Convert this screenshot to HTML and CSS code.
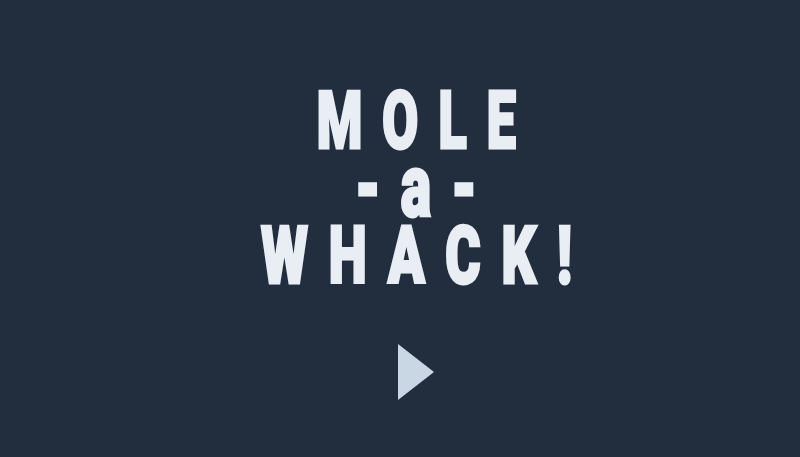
FILE: index.html
```html
<!doctype html>
<html lang="en">
  <head>
    <meta charset="UTF-8" />
    <meta name="viewport" content="width=device-width, initial-scale=1.0" />
    <title>Mole-a-Whack!</title>
    <link rel="stylesheet" href="styles.css">
  </head>
  <body>
    <main class="title-screen">
      <h1 class="logo">
        <span class="logo-line">MOLE</span>
        <span class="logo-line logo-small">-a-</span>
        <span class="logo-line logo-wide">WHACK!</span>
      </h1>
      <button class="play" aria-label="Play">
        <svg width="36" height="56" viewBox="0 0 36 56"><polygon points="0,0 36,28 0,56" /></svg>
      </button>
    </main>
  </body>
</html>
```

FILE: styles.css
```css
html,
body {
  margin: 0;
  padding: 0;
  height: 100%;
  overflow: hidden;
  background: #222e3e;
}
.title-screen {
  height: 100%;
  display: flex;
  flex-direction: column;
  align-items: center;
  padding-left: 32px;
  box-sizing: border-box;
}
.logo {
  margin: 87px 0 0;
  display: flex;
  flex-direction: column;
  align-items: center;
  font-family: Roboto, "DejaVu Sans Condensed", sans-serif;
  font-weight: 900;
  font-size: 80px;
  line-height: 68px;
  color: #e8eef4;
}
/* narrow, heavy, widely tracked block letters */
.logo-line {
  display: block;
  letter-spacing: 31px;
  padding-left: 31px;
  -webkit-text-stroke: 3px currentColor;
  transform: scaleX(0.65);
}
.logo-small {
  font-size: 88px;
  line-height: 62px;
  margin-bottom: 5px;
}
.logo-wide {
  transform: scaleX(0.675);
}
.play {
  margin-top: 54px;
  padding: 0;
  border: 0;
  background: none;
  cursor: pointer;
}
.play svg {
  display: block;
  fill: #c9d6e3;
}
```
